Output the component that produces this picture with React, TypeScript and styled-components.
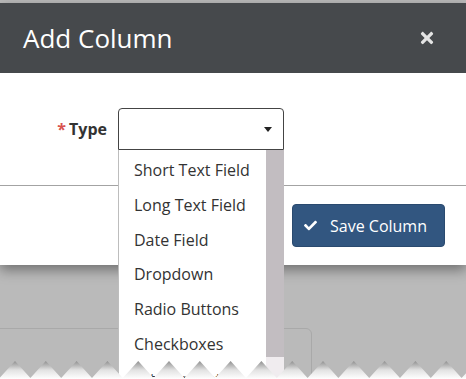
import React from 'react';
import styled, { createGlobalStyle } from 'styled-components';
import { FaTimes, FaCheck } from 'react-icons/fa';

const GlobalStyle = createGlobalStyle`
  html, body {
    margin: 0;
    padding: 0;
    background: #bababa;
    overflow: hidden;
  }
  body {
    font-family: 'Open Sans', 'Liberation Sans', sans-serif;
  }
`;

const TYPES = [
  'Short Text Field',
  'Long Text Field',
  'Date Field',
  'Dropdown',
  'Radio Buttons',
  'Checkboxes',
  'Attachment',
];

export default function App() {
  const peaks: string[] = [];
  for (let k = -1; k < 17; k++) {
    const x = 15 + 30.8 * k;
    peaks.push(`${(x - 15.4).toFixed(1)},17`);
    peaks.push(`${x.toFixed(1)},0`);
  }
  const points = `0,18 ${peaks.join(' ')} 466,18`;

  return (
    <>
      <GlobalStyle />
      <Page>
        <Modal>
          <Header>
            <Title>Add Column</Title>
            <CloseButton aria-label="close">
              <FaTimes />
            </CloseButton>
          </Header>
          <Body>
            <FormRow>
              <Label>
                <Required>*</Required>Type
              </Label>
              <SelectWrap>
                <Select>
                  <Caret />
                </Select>
                <ListBox>
                  <Options>
                    {TYPES.map((t) => (
                      <Option key={t}>{t}</Option>
                    ))}
                  </Options>
                  <ScrollTrack>
                    <ScrollThumb />
                  </ScrollTrack>
                </ListBox>
              </SelectWrap>
            </FormRow>
          </Body>
          <Footer>
            <SaveButton>
              <FaCheck size={13} />
              Save Column
            </SaveButton>
          </Footer>
        </Modal>
        <CardBehind />
        <TornEdge viewBox="0 0 466 18" preserveAspectRatio="none">
          <defs>
            <linearGradient id="torn" x1="0" y1="0" x2="0" y2="1">
              <stop offset="0" stopColor="#8f8f8f" />
              <stop offset="0.5" stopColor="#e2e2e2" />
              <stop offset="1" stopColor="#ffffff" />
            </linearGradient>
          </defs>
          <polygon points={points} fill="url(#torn)" />
        </TornEdge>
      </Page>
    </>
  );
}

const Page = styled.div`
  position: relative;
  width: 466px;
  height: 379px;
  overflow: hidden;
  background: #bababa;
  padding-top: 3px;
  box-sizing: border-box;
`;

const Modal = styled.div`
  position: relative;
  z-index: 1;
  width: 100%;
  background: #ffffff;
  box-shadow: 0 5px 12px rgba(0, 0, 0, 0.4);
`;

const Header = styled.div`
  height: 70px;
  background: #46494c;
  display: flex;
  align-items: center;
  justify-content: space-between;
  padding: 0 30px 0 23px;
`;

const Title = styled.h2`
  margin: 0;
  color: #ffffff;
  font-size: 26px;
  font-weight: 400;
  line-height: 1;
`;

const CloseButton = styled.span`
  display: flex;
  color: #e4e4e4;
  font-size: 18px;
`;

const Body = styled.div`
  height: 113px;
  box-sizing: border-box;
  padding-top: 35px;
  border-bottom: 1px solid #a3a3a3;
`;

const FormRow = styled.div`
  display: grid;
  grid-template-columns: 107px 166px;
  column-gap: 11px;
  align-items: center;
`;

const Label = styled.label`
  text-align: right;
  font-size: 16px;
  font-weight: 700;
  color: #333333;
`;

const Required = styled.span`
  color: #d9534f;
  font-weight: 700;
  margin-right: 3px;
`;

const SelectWrap = styled.div`
  position: relative;
`;

const Select = styled.div`
  height: 42px;
  box-sizing: border-box;
  border: 1px solid #444444;
  border-radius: 4px 4px 0 0;
  display: flex;
  align-items: center;
  justify-content: flex-end;
  padding-right: 11px;
  background: #ffffff;
`;

const Caret = styled.span`
  width: 0;
  height: 0;
  border-left: 4px solid transparent;
  border-right: 4px solid transparent;
  border-top: 5px solid #222222;
`;

const ListBox = styled.div`
  position: absolute;
  top: 100%;
  left: 0;
  width: 166px;
  height: 240px;
  display: flex;
  background: #ffffff;
  border-left: 1px solid #bdbdbd;
  box-sizing: border-box;
  z-index: 3;
`;

const Options = styled.ul`
  flex: 1;
  margin: 0;
  padding: 3px 0 0;
  list-style: none;
`;

const Option = styled.li`
  height: 34.8px;
  line-height: 34.8px;
  padding-left: 15px;
  font-size: 16px;
  color: #333333;
  white-space: nowrap;
`;

const ScrollTrack = styled.div`
  width: 18px;
  background: #f0ecef;
`;

const ScrollThumb = styled.div`
  height: 207px;
  background: #c2bdc1;
`;

const Footer = styled.div`
  height: 79px;
  box-sizing: border-box;
  display: flex;
  justify-content: flex-end;
  align-items: flex-start;
  padding: 18px 21px 0 0;
`;

const SaveButton = styled.button`
  width: 153px;
  height: 43px;
  display: flex;
  align-items: center;
  gap: 13px;
  padding: 0 0 0 11px;
  background: #325680;
  border: 1px solid #2a4a6f;
  border-radius: 4px;
  color: #ffffff;
  font-family: 'Open Sans', 'Liberation Sans', sans-serif;
  font-size: 16px;
  cursor: pointer;
`;

const CardBehind = styled.div`
  margin: 63px 0 0 -10px;
  width: 320px;
  height: 80px;
  border: 1px solid #a9a9a9;
  border-radius: 6px;
`;

const TornEdge = styled.svg`
  position: absolute;
  left: 0;
  bottom: 0;
  width: 466px;
  height: 18px;
  z-index: 5;
  display: block;
`;
